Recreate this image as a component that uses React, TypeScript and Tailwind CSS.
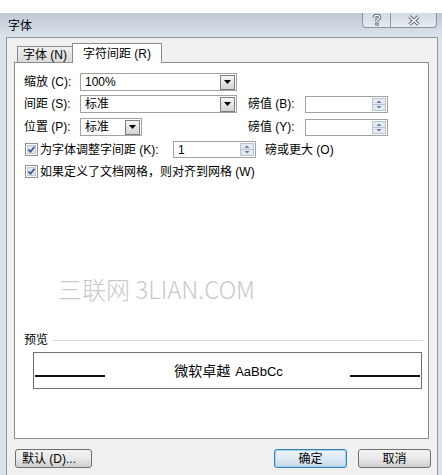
const DropArrow = () => (
  <div className="w-[15px] h-[15px] border border-[#7d7d7d] bg-linear-to-b from-[#f6f6f6] to-[#d4d4d4] flex items-center justify-center">
    <svg width="7" height="4" viewBox="0 0 7 4">
      <path d="M0 0h7L3.5 4z" fill="#000" />
    </svg>
  </div>
);

const Combo = ({ value, width }: { value: string; width: string }) => (
  <div className={`h-[18px] border border-[#a2a2a2] bg-white flex items-center justify-between pl-[4px] pr-px ${width}`}>
    <span className="leading-none">{value}</span>
    <DropArrow />
  </div>
);

const Spin = ({ value = "" }: { value?: string }) => (
  <div className="h-[17px] w-[83px] border border-[#a2a2a2] bg-white flex items-center justify-between pl-[4px] pr-px">
    <span className="leading-none">{value}</span>
    <svg width="14" height="13" viewBox="0 0 14 13">
      <rect x="0.5" y="0.5" width="13" height="12" fill="#e4eaf1" stroke="#b7c3d0" />
      <line x1="1" y1="6.5" x2="13" y2="6.5" stroke="#b7c3d0" />
      <path d="M4.5 5h5L7 2.5z" fill="#6c7f95" />
      <path d="M4.5 8h5L7 10.5z" fill="#6c7f95" />
    </svg>
  </div>
);

const Check = () => (
  <svg width="13" height="13" viewBox="0 0 13 13" className="shrink-0">
    <rect x="0.5" y="0.5" width="12" height="12" fill="#fff" stroke="#8e8f8f" />
    <rect x="2.5" y="2.5" width="8" height="8" fill="#dfe6ee" stroke="#c2cad4" />
    <path d="M3.5 6.5l2 2.2 4-5" fill="none" stroke="#3d5a8c" strokeWidth="1.8" />
  </svg>
);

const Label = ({ text, width }: { text: string; width: string }) => (
  <span className={`leading-none ${width}`}>{text}</span>
);

export default function App() {
  return (
    <div className="w-[442px] h-[475px] bg-white pt-[13px] overflow-hidden text-[12px] text-black font-['Liberation_Sans','Noto_Sans_CJK_SC',sans-serif]">
      <div className="h-[462px] flex flex-col bg-[#dbe2ea]">
        {/* Title bar */}
        <div className="h-[24px] shrink-0 flex justify-between bg-linear-to-b from-[#bfc9d5] to-[#dce3eb]">
          <span className="pl-[8px] self-center leading-none pt-px">字体</span>
          <div className="flex mr-[5px] self-start">
            <div className="w-[29px] h-[15px] border border-t-0 border-[#8c939c] rounded-bl-[4px] bg-linear-to-b from-[#d3dae3] to-[#e6ebf0] flex items-center justify-center">
              <svg width="10" height="12" viewBox="0 0 10 12">
                <path d="M2.3 3.4Q2.3 1.3 5 1.3Q7.7 1.3 7.7 3.3Q7.7 4.8 5 5.8V7.4" fill="none" stroke="#5f666f" strokeWidth="3.2" />
                <rect x="3.3" y="8.6" width="3.4" height="3" fill="#5f666f" />
                <path d="M2.3 3.4Q2.3 1.3 5 1.3Q7.7 1.3 7.7 3.3Q7.7 4.8 5 5.8V7.4" fill="none" stroke="#fff" strokeWidth="1.3" />
                <rect x="4.3" y="9.5" width="1.4" height="1.2" fill="#fff" />
              </svg>
            </div>
            <div className="w-[46px] h-[15px] border border-l-0 border-t-0 border-[#8c939c] rounded-br-[4px] bg-linear-to-b from-[#d3dae3] to-[#e6ebf0] flex items-center justify-center">
              <svg width="14" height="11" viewBox="0 0 14 11">
                <path d="M2.5 1.5L11.5 9.5M11.5 1.5L2.5 9.5" stroke="#5f666f" strokeWidth="3.6" />
                <path d="M2.5 1.5L11.5 9.5M11.5 1.5L2.5 9.5" stroke="#fff" strokeWidth="1.6" />
              </svg>
            </div>
          </div>
        </div>

        {/* Client area */}
        <div className="flex-1 ml-[6px] mr-[4px] border border-b-0 border-[#8d97a3] bg-[#f0f0f0] flex flex-col">
          {/* Tabs */}
          <div className="flex items-end pt-[5px] pl-[10px]">
            <div className="w-[56px] h-[16px] border border-b-0 border-[#898c95] bg-linear-to-b from-[#f0f0f0] to-[#d9d9d9] flex items-center justify-center leading-none">
              字体 (N)
            </div>
            <div className="relative z-10 w-[90px] h-[20px] -mb-px -ml-px border border-b-0 border-[#898c95] bg-white flex items-center justify-center leading-none">
              字符间距 (R)
            </div>
          </div>

          {/* Panel */}
          <div className="ml-[7px] w-[415px] h-[377px] shrink-0 border border-[#898c95] bg-white pl-[9px] pt-[10px] flex flex-col">
            <div className="h-[18px] flex items-center">
              <Label text="缩放 (C):" width="w-[56px]" />
              <Combo value="100%" width="w-[157px]" />
            </div>
            <div className="h-[18px] mt-[4px] flex items-center">
              <Label text="间距 (S):" width="w-[56px]" />
              <Combo value="标准" width="w-[157px]" />
              <span className="ml-[11px] w-[57px] leading-none">磅值 (B):</span>
              <Spin />
            </div>
            <div className="h-[18px] mt-[5px] flex items-center">
              <Label text="位置 (P):" width="w-[56px]" />
              <Combo value="标准" width="w-[62px]" />
              <span className="ml-[106px] w-[57px] leading-none">磅值 (Y):</span>
              <Spin />
            </div>
            <div className="h-[17px] mt-[5px] flex items-center">
              <span className="pl-px">
                <Check />
              </span>
              <span className="ml-[2px] w-[133px] leading-none">为字体调整字间距 (K):</span>
              <Spin value="1" />
              <span className="ml-[9px] leading-none">磅或更大 (O)</span>
            </div>
            <div className="h-[17px] mt-[5px] flex items-center">
              <span className="pl-px">
                <Check />
              </span>
              <span className="ml-[2px] leading-none">如果定义了文档网格，则对齐到网格 (W)</span>
            </div>

            {/* Watermark */}
            <div className="mt-[95px] ml-[34px] h-[28px] text-[24px] leading-[28px] text-[#c9c9c9] font-light font-['Noto_Sans_CJK_SC',sans-serif]">
              三联网 3LIAN.COM
            </div>

            {/* Preview */}
            <div className="mt-[29px] h-[16px] flex items-center">
              <span className="leading-none">预览</span>
              <div className="flex-1 h-px bg-[#dadada] ml-[5px] mr-[5px]" />
            </div>
            <div className="mt-[4px] ml-[9px] w-[389px] h-[37px] border border-[#707070] flex items-center">
              <div className="self-end mb-[11px] ml-px w-[70px] h-[2px] bg-[#111]" />
              <div className="flex-1 flex items-baseline justify-center gap-[5px] pl-[2px]">
                <span className="text-[14px] leading-none font-['Noto_Sans_CJK_SC',sans-serif]">微软卓越</span>
                <span className="text-[13px] leading-none">AaBbCc</span>
              </div>
              <div className="self-end mb-[11px] mr-px w-[70px] h-[2px] bg-[#111]" />
            </div>
          </div>

          {/* Buttons */}
          <div className="mt-[10px] pl-[8px] pr-[6px] flex items-center">
            <button className="w-[77px] h-[19px] rounded-[3px] border border-[#707070] bg-linear-to-b from-[#f3f3f3] via-[#e8e8e8] to-[#cfcfcf] text-[12px] leading-none text-left pl-[6px]">
              默认 (D)...
            </button>
            <button className="ml-auto w-[73px] h-[19px] rounded-[3px] border border-[#3c7fb1] bg-linear-to-b from-[#eef5fa] via-[#dde9f3] to-[#c4d7e8] text-[12px] leading-none shadow-[inset_0_0_0_1px_#9fd3f0]">
              确定
            </button>
            <button className="ml-[11px] w-[73px] h-[19px] rounded-[3px] border border-[#707070] bg-linear-to-b from-[#f3f3f3] via-[#e8e8e8] to-[#cfcfcf] text-[12px] leading-none">
              取消
            </button>
          </div>
        </div>
      </div>
    </div>
  );
}
